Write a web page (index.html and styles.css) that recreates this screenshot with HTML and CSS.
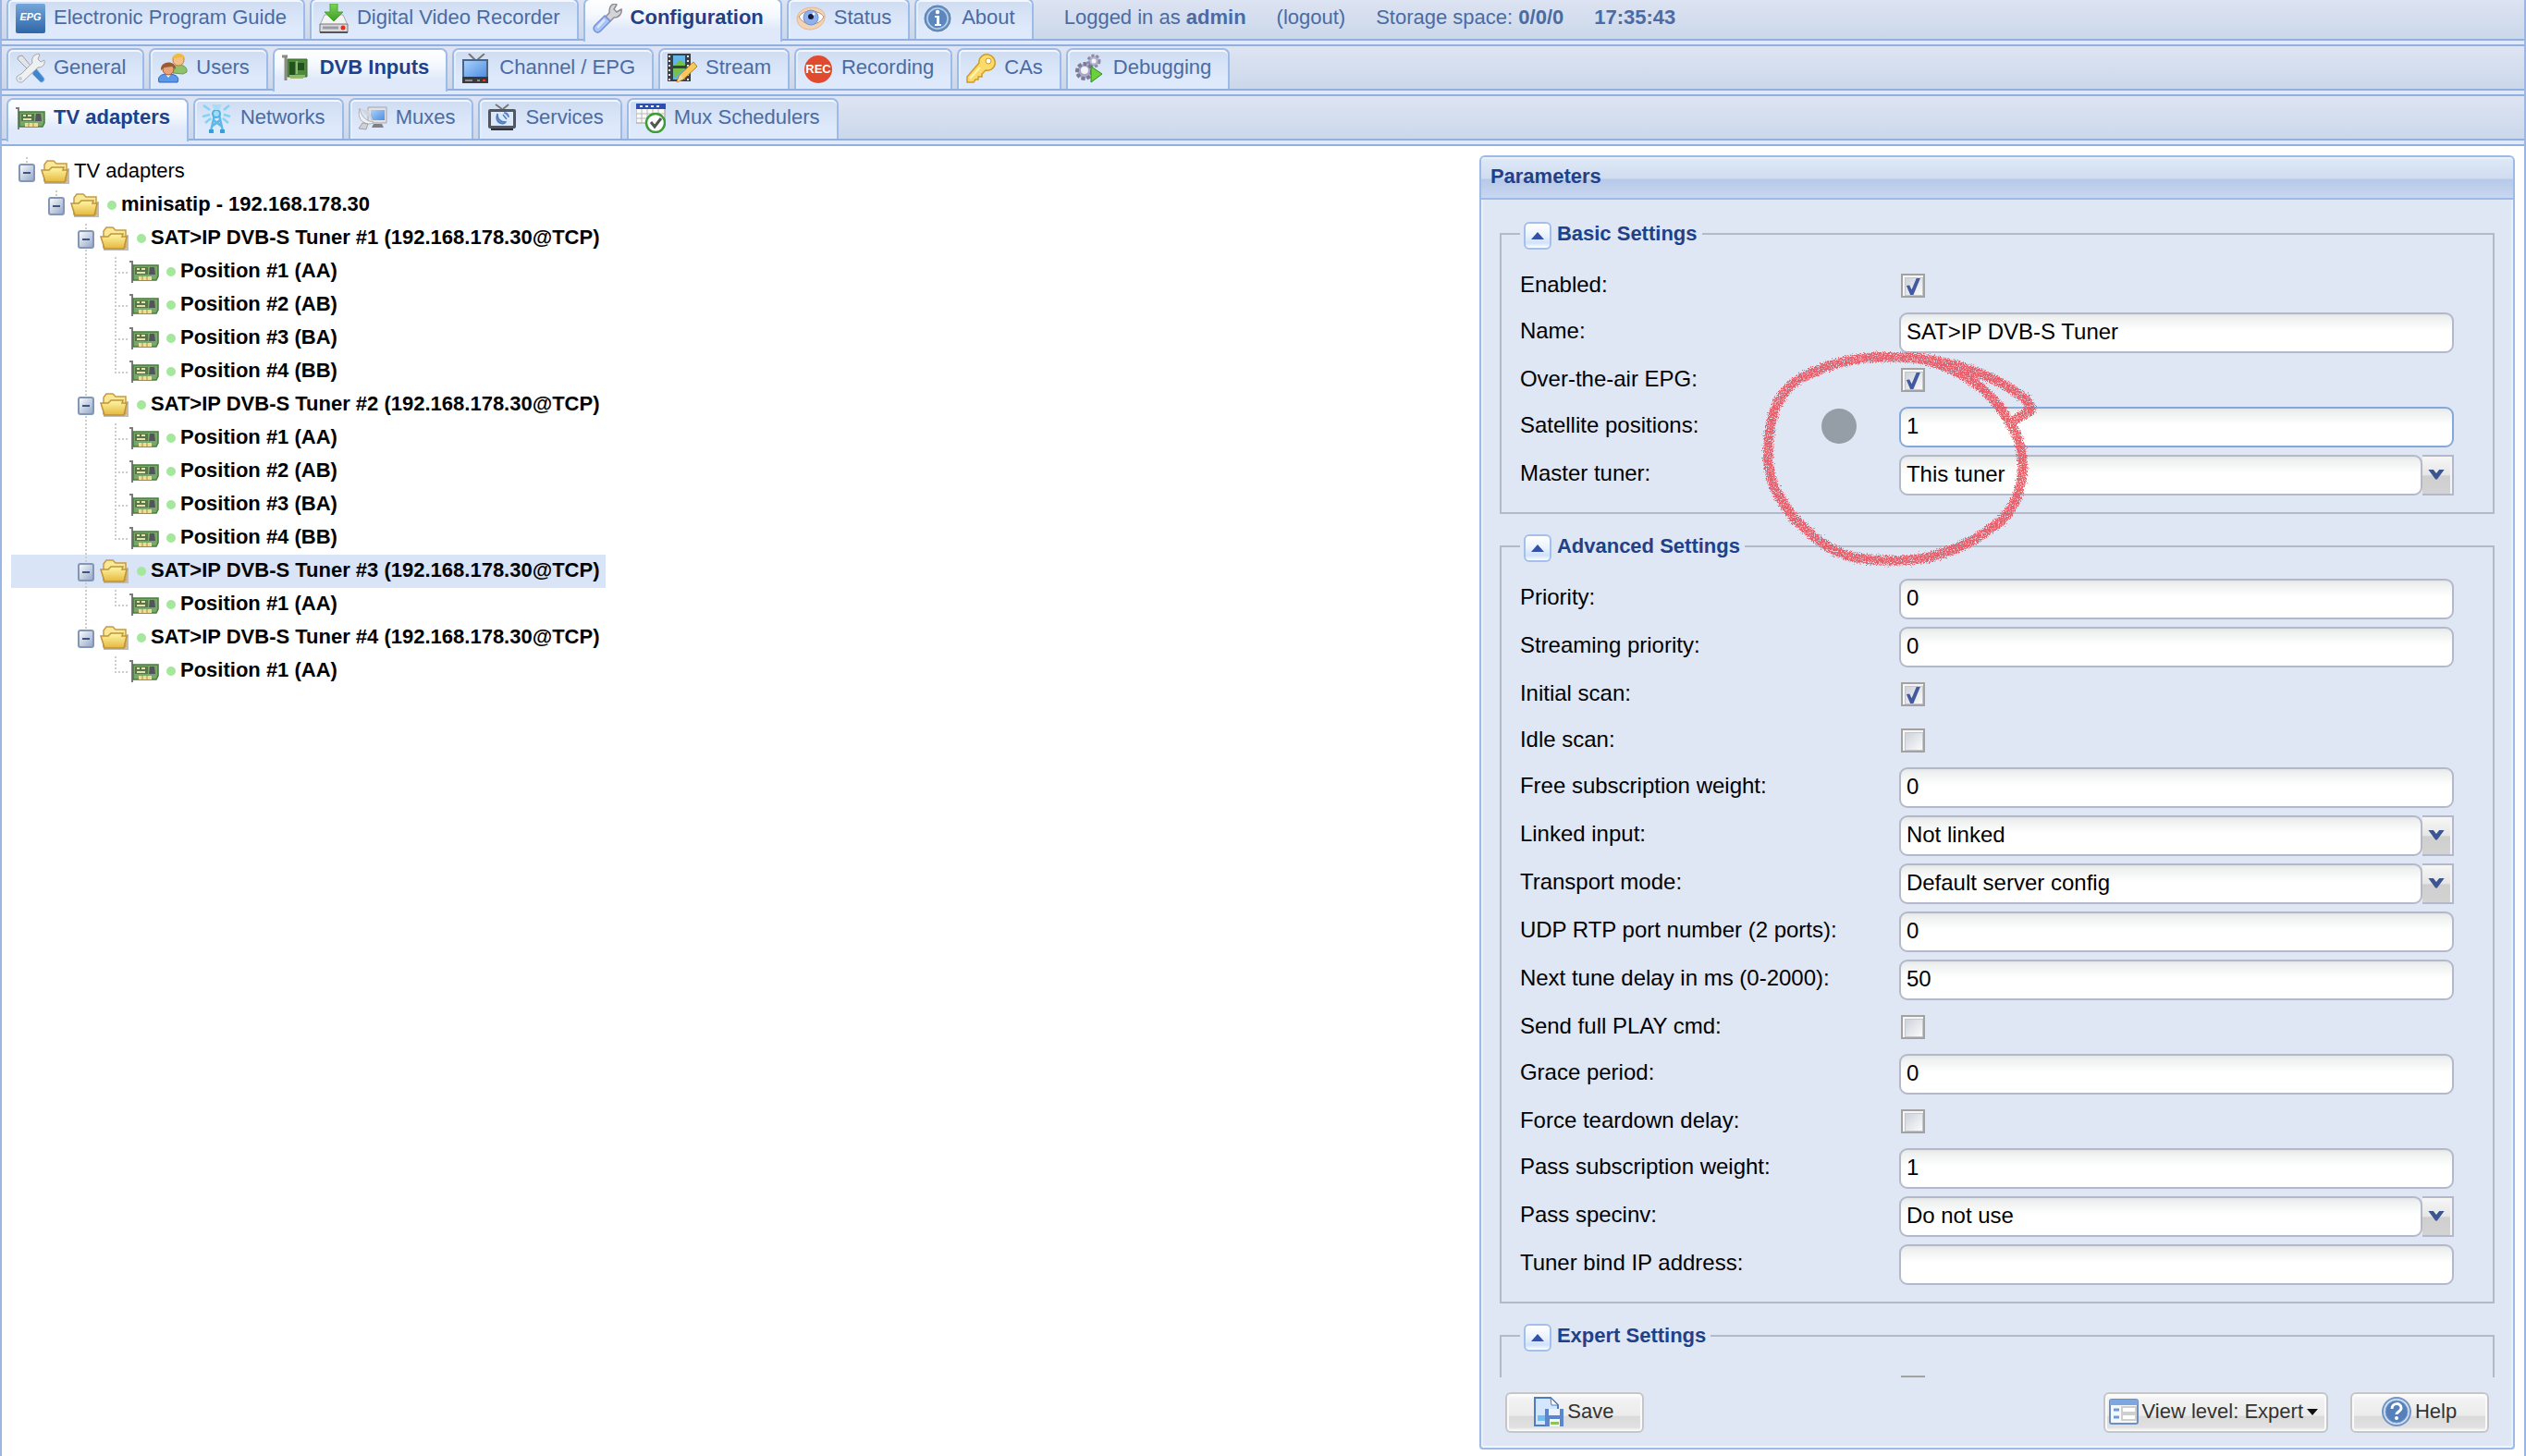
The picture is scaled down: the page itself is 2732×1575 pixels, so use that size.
FILE: index.html
```html
<!DOCTYPE html>
<html lang="en">
<head>
    <meta charset="UTF-8">
    <meta name="viewport" content="width=device-width, initial-scale=1.0">
    <title>Tvheadend</title>
    <link rel="stylesheet" href="styles.css">
</head>
<body>

<!-- Icon set -->
<svg class="icon-defs" aria-hidden="true">
    <defs>
        <linearGradient id="gBlue" x1="0" y1="0" x2="0" y2="1"><stop offset="0" stop-color="#74a6d9"/><stop offset="1" stop-color="#2f66a8"/></linearGradient>
        <linearGradient id="gFolder" x1="0" y1="0" x2="0" y2="1"><stop offset="0" stop-color="#fff6a8"/><stop offset="1" stop-color="#e5b93c"/></linearGradient>
        <linearGradient id="gScreen" x1="0" y1="0" x2="1" y2="1"><stop offset="0" stop-color="#a9d0fb"/><stop offset="1" stop-color="#4f8fe0"/></linearGradient>
        <linearGradient id="gMinus" x1="0" y1="0" x2="1" y2="1"><stop offset="0" stop-color="#ffffff"/><stop offset="1" stop-color="#90a4c6"/></linearGradient>
        <linearGradient id="gArrow" x1="0" y1="0" x2="0" y2="1"><stop offset="0" stop-color="#7fd45a"/><stop offset="1" stop-color="#3a9e22"/></linearGradient>
        <filter id="crayon" x="-5%" y="-5%" width="110%" height="110%">
            <feTurbulence type="fractalNoise" baseFrequency="0.28" numOctaves="2" seed="4" result="noise"/>
            <feDisplacementMap in="SourceGraphic" in2="noise" xChannelSelector="R" yChannelSelector="G" scale="24" result="rough"/>
            <feColorMatrix in="noise" type="matrix" values="0 0 0 0 1  0 0 0 0 1  0 0 0 0 1  0 0 0 4 -1" result="grain"/>
            <feComposite in="rough" in2="grain" operator="in"/>
        </filter>
    </defs>

    <symbol id="i-dvr" viewBox="0 0 32 32">
        <path d="M6 12h20l5 11H1z" fill="#f4f4f4" stroke="#aaa"/>
        <path d="M1 22h30v9H1z" fill="#d9d9dc" stroke="#777"/>
        <path d="M1 30h30v2H1z" fill="#555"/>
        <path d="M4 26h17" stroke="#9a9aa8" stroke-width="3"/>
        <circle cx="26" cy="26" r="2.5" fill="#ee2a1a"/>
        <path d="M12 0h8v9h6L16 19 6 9h6z" fill="url(#gArrow)" stroke="#4ba632"/>
    </symbol>
    <symbol id="i-wrench" viewBox="0 0 32 32">
        <path d="M20 2c2-2 5-2 6-1l-3 5 3 3 5-3c1 4-2 9-8 9l-4 4-5-5 4-4c0-3 0-6 2-8z" fill="#d4d4d8" stroke="#8e8e94" stroke-width="1.5"/>
        <path d="M13 13l6 6L8 30c-3 3-9-1-6-6z" fill="#a9c4f5" stroke="#7392d6" stroke-width="1.5"/>
        <path d="M13 17L5 26" stroke="#dbe7fd" stroke-width="2.5"/>
    </symbol>
    <symbol id="i-eye" viewBox="0 0 32 32">
        <path d="M1 15C4 1 28 1 31 12c1 8-5 15-15 16C7 28 1 24 1 15z" fill="#f3d3b4" stroke="#e3b78c"/>
        <path d="M3 14C8 6 24 6 30 14c-5 10-20 12-27 0z" fill="#fff" stroke="#b98a60"/>
        <circle cx="16" cy="15" r="8" fill="#8fb1f0" stroke="#6f92d6"/>
        <circle cx="16" cy="14" r="3" fill="#1c1c3c"/>
        <circle cx="19" cy="11" r="1.5" fill="#fff"/>
    </symbol>
    <symbol id="i-info" viewBox="0 0 32 32">
        <circle cx="15" cy="16" r="14" fill="#6c93c3" stroke="#5278a8"/>
        <circle cx="15" cy="16" r="11" fill="#5b87bd" stroke="#bcd0ea" stroke-width="1.5"/>
        <circle cx="15" cy="9" r="2.2" fill="#fff"/>
        <path d="M12 13h5v9h2v2h-7v-2h2v-7h-2z" fill="#fff"/>
    </symbol>
    <symbol id="i-tools" viewBox="0 0 32 32">
        <path d="M3 3l4-1 13 16-3 3L2 6z" fill="#e2e4e8" stroke="#9da0a6"/>
        <path d="M19 17l3-1 9 11c0 3-2 4-4 4l-9-9z" fill="#3f86cc" stroke="#8fb6de"/>
        <path d="M20 2c3-2 5-2 6-1l-2 5 3 3 4-2c1 5-2 8-7 8L9 29c-3 4-9 2-8-4 1-1 3-2 5-3L18 10c-1-3 0-6 2-8z" fill="#eef0f2" stroke="#a3a6ac"/>
        <circle cx="5" cy="27" r="2" fill="#c3cfde"/>
    </symbol>
    <symbol id="i-users" viewBox="0 0 32 32">
        <path d="M16 21c-1-6 2-9 6-9s10 2 9 8l-4 2z" fill="#8fc06a" stroke="#6b9c48"/>
        <circle cx="22" cy="7" r="6" fill="#f4c08a" stroke="#b98343"/>
        <path d="M15 7c0-9 14-9 14-1l-3-2-9 1z" fill="#eebb3a"/>
        <path d="M1 31c-2-6 2-9 9-9s14 2 11 9z" fill="#5c97e8" stroke="#2f64b8"/>
        <path d="M8 22l3 4 3-4z" fill="#fff"/>
        <circle cx="11" cy="17" r="6" fill="#e9a27a" stroke="#9a5a32"/>
        <path d="M3 18c-1-11 17-11 16-1l-4-3-8 1z" fill="#9a5c36"/>
    </symbol>
    <symbol id="i-pci" viewBox="0 0 32 32">
        <path d="M0 3h6M4 3v26" stroke="#8a8a80" stroke-width="3" fill="none"/>
        <path d="M6 6h21v19H6z" fill="#4f8a3c" stroke="#3b6a2f"/>
        <path d="M8 9h6v14H8zM17 10h7v8h-7z" fill="#24521f"/>
        <path d="M16 8v14M8 24h17" stroke="#9ccc7c" stroke-width="1.5"/>
        <path d="M9 25h14v2H9z" fill="#a8b070"/>
    </symbol>
    <symbol id="i-tv" viewBox="0 0 32 32">
        <path d="M8 0l7 7M25 0l-8 7" stroke="#777" stroke-width="2" fill="none"/>
        <path d="M1 6h28v20H1z" fill="#4e6485"/>
        <path d="M3 8h24v17H3z" fill="url(#gScreen)"/>
        <path d="M1 25h28v7H1z" fill="#3a3a3e"/>
        <path d="M4 29h8M17 29h3" stroke="#aaa" stroke-width="1.5"/>
        <path d="M23 29h3" stroke="#e83a2a" stroke-width="2"/>
    </symbol>
    <symbol id="i-film" viewBox="0 0 32 32">
        <path d="M0 0h25v30H0z" fill="#3c3f44"/>
        <path d="M2 2v28M22 2v28" stroke="#e8e8e8" stroke-width="2" stroke-dasharray="2 3"/>
        <path d="M6 2h13v11H6zM6 16h13v12H6z" fill="#65b5e6"/>
        <path d="M6 13l8-6 5 4v2zM6 16h13L7 27z" fill="#74c14c"/>
        <path d="M28 9l4 5-15 14-7 3 2-7z" fill="#f6c95c" stroke="#b97c1e"/>
        <path d="M14 23l3 4-7 4z" fill="#eed9b4"/>
    </symbol>
    <symbol id="i-key" viewBox="0 0 32 32">
        <path d="M14 10c-1-6 5-10 10-9 5 1 8 6 7 11-1 4-5 7-10 6l-4 4v3h-4v3h-3l-2 3H1v-6z" fill="#fbdc6a" stroke="#cf9a28" stroke-width="1.5"/>
        <circle cx="24" cy="8" r="3" fill="#fff" stroke="#cf9a28"/>
        <path d="M15 15L4 27" stroke="#fff3b8" stroke-width="2"/>
    </symbol>
    <symbol id="i-gears" viewBox="0 0 32 32">
        <circle cx="20" cy="8" r="6" fill="#b4b3ce" stroke="#8b8aa8" stroke-width="3" stroke-dasharray="3 2"/>
        <circle cx="20" cy="8" r="2.5" fill="#f3f3fa"/>
        <circle cx="10" cy="19" r="8" fill="#a9a8c6" stroke="#7b7a98" stroke-width="4" stroke-dasharray="4 2"/>
        <circle cx="10" cy="18" r="4" fill="#f3f3fa"/>
        <path d="M17 14l12 8-12 9z" fill="#6bd03c" stroke="#2f8a1c"/>
    </symbol>
    <symbol id="i-card" viewBox="0 0 32 32">
        <path d="M0 5h3v23" fill="none" stroke="#7d7d7d" stroke-width="2"/>
        <path d="M4 9h27v12l-2 4H4z" fill="#78a867" stroke="#4a7a42" stroke-width="1.5"/>
        <path d="M6 11h14v8H6z" fill="#56754c"/>
        <path d="M8 13h3M13 13h4M8 17h9" stroke="#e4e2a6" stroke-width="2"/>
        <path d="M21 19l1-8h5l1 8z" fill="#54545e"/>
        <path d="M10 21h14v4H10z" fill="#f0dc92"/>
        <path d="M14 21v4M19 21v4" stroke="#a58f4c"/>
    </symbol>
    <symbol id="i-tower" viewBox="0 0 32 32">
        <path d="M14 8L9 30M17 8l5 22M12 18l8 6M19 18l-8 6" stroke="#5cb8e6" stroke-width="2.5" fill="none"/>
        <path d="M7 30h5M19 30h5" stroke="#3a9ed4" stroke-width="4"/>
        <circle cx="15" cy="11" r="4" fill="#a5dcf5" stroke="#4cb2e4" stroke-width="2"/>
        <path d="M10 1h11l-3 6h-5z" fill="#a5dff7"/>
        <path d="M8 7L1 2M23 7l6-5M8 12L0 14M23 12l7 2M9 16l-6 5M22 16l6 5" stroke="#84d2f4" stroke-width="2.5"/>
    </symbol>
    <symbol id="i-mux" viewBox="0 0 32 32">
        <path d="M11 4h20v17H11z" fill="#dfe1e6" stroke="#a2a5ac"/>
        <path d="M14 7h15v11H14z" fill="url(#gScreen)"/>
        <path d="M17 22h9l2 4H15z" fill="#7e8086"/>
        <path d="M2 5c2 10 7 14 15 15-2 4-13 2-15-5-1-3-1-7 0-10z" fill="#f2f2f4" stroke="#aeb0b6"/>
        <path d="M2 5l15 15L12 8z" fill="#d2d4da"/>
        <path d="M5 21l-4 6 8 1 2-6z" fill="#cfd1d6" stroke="#a0a2a8"/>
    </symbol>
    <symbol id="i-service" viewBox="0 0 32 32">
        <path d="M9 1l7 5M23 1l-6 5" stroke="#777" stroke-width="2" fill="none"/>
        <rect x="1" y="6" width="30" height="21" rx="2" fill="#505864"/>
        <rect x="4" y="9" width="24" height="15" fill="#dde8f8"/>
        <path d="M11 11c0 7 4 9 9 9-2 4-13 1-9-9zM17 12l4 5M18 10c3 0 5 2 5 5" fill="#6f9ada" stroke="#4f7cc4" stroke-width="1.5"/>
        <path d="M4 27h24v2H4z" fill="#2e3238"/>
    </symbol>
    <symbol id="i-sched" viewBox="0 0 32 32">
        <path d="M0 1h31v20H0z" fill="#fafafa" stroke="#9b9b9b"/>
        <path d="M0 0h32v6H0z" fill="#2c50b0"/>
        <path d="M4 3h24" stroke="#e8eefc" stroke-width="2" stroke-dasharray="3 3"/>
        <path d="M0 11h31M0 16h31M6 6v15M12 6v15M18 6v15M24 6v15" stroke="#b8b8b8"/>
        <circle cx="21" cy="21" r="10" fill="#fff" stroke="#3f9a38" stroke-width="2.5"/>
        <path d="M16 20l4 5 7-9" stroke="#555" stroke-width="3" fill="none"/>
    </symbol>
    <symbol id="i-folder" viewBox="0 0 32 32">
        <path d="M4 28h26V12" fill="none" stroke="#bdbdbd" stroke-width="2"/>
        <path d="M4 8l3-4h7l3 3h11v19H4z" fill="#f9e894" stroke="#c49a4a" stroke-width="1.5"/>
        <path d="M1 14h8l3-3h13l-1 3h5l-3 13H5z" fill="url(#gFolder)" stroke="#c0933a" stroke-width="1.5"/>
    </symbol>
    <symbol id="i-minus" viewBox="0 0 18 20">
        <rect x="1" y="1" width="16" height="18" rx="2" fill="url(#gMinus)" stroke="#8496b6" stroke-width="2"/>
        <path d="M5 10h8" stroke="#3d5583" stroke-width="2"/>
    </symbol>
    <symbol id="i-save" viewBox="0 0 32 32">
        <path d="M1 1h17l8 8v22H1z" fill="#d3e6fb" stroke="#4b7cc4" stroke-width="2"/>
        <path d="M18 1l1 8h7z" fill="#fff" stroke="#4b7cc4"/>
        <path d="M4 20h9v6H4z" fill="#74bdf5"/>
        <path d="M12 13h20v19H14l-2-2z" fill="#5b86cb"/>
        <path d="M16 13h12v7H16z" fill="#e9f1fc"/>
        <path d="M17 24h11v8H17z" fill="#f3f6fa"/>
        <path d="M18 27h9v3h-9z" fill="#8bc653"/>
    </symbol>
    <symbol id="i-level" viewBox="0 0 32 32">
        <rect x="1" y="3" width="30" height="26" rx="2" fill="#f4f7fc" stroke="#6d8fc6" stroke-width="2"/>
        <path d="M1 3h30v6H1z" fill="#7da7e0"/>
        <path d="M5 14h6M5 22h6" stroke="#6d9be0" stroke-width="3"/>
        <path d="M14 11h15v6H14zM14 19h15v6H14z" fill="#fff" stroke="#cfcfcf" stroke-width="2"/>
    </symbol>
    <symbol id="i-help" viewBox="0 0 32 32">
        <circle cx="16" cy="16" r="15" fill="#d3e0f1" stroke="#7294c6" stroke-width="2"/>
        <circle cx="16" cy="16" r="12" fill="#5580b9" stroke="#7ea0d0"/>
        <path d="M11 13c0-7 10-7 10-1 0 4-5 4-5 7" fill="none" stroke="#fff" stroke-width="3"/>
        <circle cx="16" cy="23" r="2" fill="#fff"/>
    </symbol>
</svg>

<!-- Main tabs -->
<nav class="tab-bar tab-bar-main">
    <a class="tab" href="#epg"><svg class="icon" viewBox="0 0 32 32">
        <rect width="32" height="32" rx="2" fill="url(#gBlue)"/>
        <text x="16" y="18" text-anchor="middle" font-size="11" font-weight="bold" font-style="italic" fill="#fff">EPG</text>
    </svg>Electronic Program Guide</a>
    <a class="tab" href="#dvr"><svg class="icon"><use href="#i-dvr"/></svg>Digital Video Recorder</a>
    <a class="tab active" href="#config"><svg class="icon"><use href="#i-wrench"/></svg>Configuration</a>
    <a class="tab" href="#status"><svg class="icon"><use href="#i-eye"/></svg>Status</a>
    <a class="tab" href="#about"><svg class="icon"><use href="#i-info"/></svg>About</a>
    <div class="session">
        <span>Logged in as <b>admin</b></span>
        <a href="#logout">(logout)</a>
        <span>Storage space: <b>0/0/0</b></span>
        <b>17:35:43</b>
    </div>
</nav>

<!-- Configuration tabs -->
<nav class="tab-bar">
    <a class="tab" href="#general"><svg class="icon"><use href="#i-tools"/></svg>General</a>
    <a class="tab" href="#users"><svg class="icon"><use href="#i-users"/></svg>Users</a>
    <a class="tab active" href="#dvb"><svg class="icon"><use href="#i-pci"/></svg>DVB Inputs</a>
    <a class="tab" href="#channel"><svg class="icon"><use href="#i-tv"/></svg>Channel / EPG</a>
    <a class="tab" href="#stream"><svg class="icon"><use href="#i-film"/></svg>Stream</a>
    <a class="tab" href="#recording"><svg class="icon" viewBox="0 0 32 32">
        <circle cx="16" cy="17" r="15" fill="#e04a2e"/>
        <text x="16" y="21" text-anchor="middle" font-size="13" font-weight="bold" fill="#fff">REC</text>
    </svg>Recording</a>
    <a class="tab" href="#cas"><svg class="icon"><use href="#i-key"/></svg>CAs</a>
    <a class="tab" href="#debugging"><svg class="icon"><use href="#i-gears"/></svg>Debugging</a>
</nav>

<!-- DVB input tabs -->
<nav class="tab-bar">
    <a class="tab active" href="#adapters"><svg class="icon"><use href="#i-card"/></svg>TV adapters</a>
    <a class="tab" href="#networks"><svg class="icon"><use href="#i-tower"/></svg>Networks</a>
    <a class="tab" href="#muxes"><svg class="icon"><use href="#i-mux"/></svg>Muxes</a>
    <a class="tab" href="#services"><svg class="icon"><use href="#i-service"/></svg>Services</a>
    <a class="tab" href="#schedulers"><svg class="icon"><use href="#i-sched"/></svg>Mux Schedulers</a>
</nav>

<main class="content">

    <!-- Adapter tree -->
    <section class="tree-pane">
        <ul class="tree">
            <li class="node root"><i class="cell stub"><svg class="minus"><use href="#i-minus"/></svg></i><svg class="icon"><use href="#i-folder"/></svg>TV adapters</li>
            <li class="node"><i class="cell"></i><i class="cell stub"><svg class="minus"><use href="#i-minus"/></svg></i><svg class="icon"><use href="#i-folder"/></svg><i class="dot"></i>minisatip - 192.168.178.30</li>

            <li class="node"><i class="cell"></i><i class="cell"></i><i class="cell line"><svg class="minus"><use href="#i-minus"/></svg></i><svg class="icon"><use href="#i-folder"/></svg><i class="dot"></i>SAT&gt;IP DVB-S Tuner #1 (192.168.178.30@TCP)</li>
            <li class="node"><i class="cell"></i><i class="cell"></i><i class="cell line"></i><i class="cell line elbow"></i><svg class="icon"><use href="#i-card"/></svg><i class="dot"></i>Position #1 (AA)</li>
            <li class="node"><i class="cell"></i><i class="cell"></i><i class="cell line"></i><i class="cell line elbow"></i><svg class="icon"><use href="#i-card"/></svg><i class="dot"></i>Position #2 (AB)</li>
            <li class="node"><i class="cell"></i><i class="cell"></i><i class="cell line"></i><i class="cell line elbow"></i><svg class="icon"><use href="#i-card"/></svg><i class="dot"></i>Position #3 (BA)</li>
            <li class="node"><i class="cell"></i><i class="cell"></i><i class="cell line"></i><i class="cell stub elbow"></i><svg class="icon"><use href="#i-card"/></svg><i class="dot"></i>Position #4 (BB)</li>

            <li class="node"><i class="cell"></i><i class="cell"></i><i class="cell line"><svg class="minus"><use href="#i-minus"/></svg></i><svg class="icon"><use href="#i-folder"/></svg><i class="dot"></i>SAT&gt;IP DVB-S Tuner #2 (192.168.178.30@TCP)</li>
            <li class="node"><i class="cell"></i><i class="cell"></i><i class="cell line"></i><i class="cell line elbow"></i><svg class="icon"><use href="#i-card"/></svg><i class="dot"></i>Position #1 (AA)</li>
            <li class="node"><i class="cell"></i><i class="cell"></i><i class="cell line"></i><i class="cell line elbow"></i><svg class="icon"><use href="#i-card"/></svg><i class="dot"></i>Position #2 (AB)</li>
            <li class="node"><i class="cell"></i><i class="cell"></i><i class="cell line"></i><i class="cell line elbow"></i><svg class="icon"><use href="#i-card"/></svg><i class="dot"></i>Position #3 (BA)</li>
            <li class="node"><i class="cell"></i><i class="cell"></i><i class="cell line"></i><i class="cell stub elbow"></i><svg class="icon"><use href="#i-card"/></svg><i class="dot"></i>Position #4 (BB)</li>

            <li class="node selected"><i class="cell"></i><i class="cell"></i><i class="cell line"><svg class="minus"><use href="#i-minus"/></svg></i><svg class="icon"><use href="#i-folder"/></svg><i class="dot"></i>SAT&gt;IP DVB-S Tuner #3 (192.168.178.30@TCP)</li>
            <li class="node"><i class="cell"></i><i class="cell"></i><i class="cell line"></i><i class="cell stub elbow"></i><svg class="icon"><use href="#i-card"/></svg><i class="dot"></i>Position #1 (AA)</li>

            <li class="node"><i class="cell"></i><i class="cell"></i><i class="cell stub"><svg class="minus"><use href="#i-minus"/></svg></i><svg class="icon"><use href="#i-folder"/></svg><i class="dot"></i>SAT&gt;IP DVB-S Tuner #4 (192.168.178.30@TCP)</li>
            <li class="node"><i class="cell"></i><i class="cell"></i><i class="cell"></i><i class="cell stub elbow"></i><svg class="icon"><use href="#i-card"/></svg><i class="dot"></i>Position #1 (AA)</li>
        </ul>
    </section>

    <!-- Parameters -->
    <form class="panel">
        <h2 class="panel-title">Parameters</h2>

        <div class="panel-body">
            <fieldset class="group">
                <legend><button type="button" class="toggle" aria-label="Collapse Basic Settings"></button><span>Basic Settings</span></legend>
                <div class="row row-check"><label for="enabled">Enabled:</label><input type="checkbox" id="enabled" checked></div>
                <div class="row"><label for="name">Name:</label><input type="text" id="name" value="SAT&gt;IP DVB-S Tuner"></div>
                <div class="row row-check"><label for="otaepg">Over-the-air EPG:</label><input type="checkbox" id="otaepg" checked></div>
                <div class="row"><label for="positions">Satellite positions:</label><input type="text" id="positions" class="focused" value="1"></div>
                <div class="row"><label for="master">Master tuner:</label><select id="master"><option>This tuner</option></select><span class="trigger"></span></div>
            </fieldset>

            <fieldset class="group">
                <legend><button type="button" class="toggle" aria-label="Collapse Advanced Settings"></button><span>Advanced Settings</span></legend>
                <div class="row"><label for="priority">Priority:</label><input type="text" id="priority" value="0"></div>
                <div class="row"><label for="spriority">Streaming priority:</label><input type="text" id="spriority" value="0"></div>
                <div class="row row-check"><label for="initscan">Initial scan:</label><input type="checkbox" id="initscan" checked></div>
                <div class="row row-check"><label for="idlescan">Idle scan:</label><input type="checkbox" id="idlescan"></div>
                <div class="row"><label for="weight">Free subscription weight:</label><input type="text" id="weight" value="0"></div>
                <div class="row"><label for="linked">Linked input:</label><select id="linked"><option>Not linked</option></select><span class="trigger"></span></div>
                <div class="row"><label for="transport">Transport mode:</label><select id="transport"><option>Default server config</option></select><span class="trigger"></span></div>
                <div class="row"><label for="rtpport">UDP RTP port number (2 ports):</label><input type="text" id="rtpport" value="0"></div>
                <div class="row"><label for="tunedelay">Next tune delay in ms (0-2000):</label><input type="text" id="tunedelay" value="50"></div>
                <div class="row row-check"><label for="fullplay">Send full PLAY cmd:</label><input type="checkbox" id="fullplay"></div>
                <div class="row"><label for="grace">Grace period:</label><input type="text" id="grace" value="0"></div>
                <div class="row row-check"><label for="teardown">Force teardown delay:</label><input type="checkbox" id="teardown"></div>
                <div class="row"><label for="passweight">Pass subscription weight:</label><input type="text" id="passweight" value="1"></div>
                <div class="row"><label for="specinv">Pass specinv:</label><select id="specinv"><option>Do not use</option></select><span class="trigger"></span></div>
                <div class="row"><label for="bindip">Tuner bind IP address:</label><input type="text" id="bindip" value=""></div>
            </fieldset>

            <fieldset class="group">
                <legend><button type="button" class="toggle" aria-label="Collapse Expert Settings"></button><span>Expert Settings</span></legend>
                <div class="row row-check"><span class="row-blank"></span><input type="checkbox" aria-label="Expert option"></div>
            </fieldset>
        </div>

        <div class="panel-buttons">
            <button type="button" class="btn"><svg class="icon"><use href="#i-save"/></svg>Save</button>
            <span class="fill"></span>
            <button type="button" class="btn"><svg class="icon"><use href="#i-level"/></svg>View level: Expert<i class="caret"></i></button>
            <button type="button" class="btn"><svg class="icon"><use href="#i-help"/></svg>Help</button>
        </div>

        <!-- Hand-drawn marker over the form -->
        <svg class="marker" viewBox="0 0 1020 750" aria-hidden="true">
            <circle cx="327" cy="273" r="57" fill="#959da7"/>
            <path filter="url(#crayon)" fill="none" stroke="#e8505a" stroke-width="31" stroke-linecap="round" stroke-linejoin="round" opacity="0.9"
                d="M882 264L952 218L932 184C880 145 820 112 740 86C640 52 540 44 430 50C330 58 250 88 180 132C115 185 102 260 97 340C92 430 115 490 185 575C260 650 310 685 380 700C450 710 520 715 600 702C680 685 740 660 810 612C880 565 905 520 918 450C930 380 915 310 880 260C840 190 780 130 700 92C650 68 610 56 560 50"/>
        </svg>
    </form>

</main>

</body>
</html>
```
FILE: styles.css
```css
* {
    box-sizing: border-box;
}

body {
    margin: 0;
    height: 100vh;
    display: flex;
    flex-direction: column;
    overflow: hidden;
    font-family: "Liberation Sans", Arial, sans-serif;
    font-size: 22px;
    color: #000;
    background: #fff;
    border-left: 2px solid #9cb6e3;
    border-right: 2px solid #9cb6e3;
}

button, input, select {
    font-family: inherit;
    font-size: 24px;
    color: #000;
    margin: 0;
}

.icon-defs {
    position: absolute;
    width: 0;
    height: 0;
}

.icon {
    flex: none;
    width: 32px;
    height: 32px;
}

/* Tab bars */
.tab-bar {
    flex: none;
    display: flex;
    gap: 5px;
    height: 54px;
    padding: 2px 5px 0;
    background: linear-gradient(#dee4f3, #cbd8ea 46px, #91b0e0 46px, #91b0e0 48px, #dfe9fa 48px);
    border-bottom: 2px solid #91b0e0;
}
.tab-bar-main {
    margin-top: -4px;
}
.tab {
    display: flex;
    gap: 9px;
    height: 44px;
    padding: 4px 18px 0 8px;
    line-height: 30px;
    white-space: nowrap;
    color: #4a6ba3;
    text-decoration: none;
    border: 2px solid #9dbbe8;
    border-bottom: none;
    border-radius: 7px 7px 0 0;
    background: linear-gradient(#cfdcf1, #deeafb 70%);
    box-shadow: inset 0 2px #f4f8fe, inset 2px 0 #e6eefb;
}
.tab.active {
    height: 47px;
    font-weight: bold;
    color: #20418a;
    background: linear-gradient(#fff, #f3f7fd 40%, #dfe9fa 70%);
    box-shadow: none;
}
.session {
    display: flex;
    gap: 33px;
    padding: 6px 0 0 28px;
    line-height: 30px;
    color: #4a6ba3;
}
.session a {
    color: inherit;
    text-decoration: none;
}

.content {
    flex: 1;
    min-height: 0;
    display: flex;
    padding: 10px 10px 7px;
}

/* Tree */
.tree-pane {
    flex: 1;
    min-width: 0;
}
.tree {
    width: max-content;
    margin: 0;
    padding: 0;
    list-style: none;
}
.node {
    display: flex;
    align-items: flex-start;
    height: 36px;
    padding-right: 7px;
    line-height: 34px;
    font-weight: bold;
    white-space: nowrap;
}
.node.root {
    font-weight: normal;
}
.node.selected {
    background: #d9e4f7;
}
.node .icon {
    margin: 2px 4px 0 0;
}
.cell {
    flex: none;
    width: 32px;
    height: 36px;
    background-repeat: no-repeat;
}
.cell.line {
    background-image: repeating-linear-gradient(transparent 0 2px, #ccc 2px 4px);
    background-size: 2px 36px;
    background-position: 16px 0;
}
.cell.stub {
    background-image: repeating-linear-gradient(transparent 0 2px, #ccc 2px 4px);
    background-size: 2px 18px;
    background-position: 16px 0;
}
.cell.elbow::after {
    content: "";
    display: block;
    height: 2px;
    margin: 18px 0 0 16px;
    background: repeating-linear-gradient(90deg, #ccc 0 2px, transparent 2px 4px);
}
.minus {
    display: block;
    width: 18px;
    height: 20px;
    margin: 9px 0 0 8px;
}
.dot {
    flex: none;
    width: 10px;
    height: 10px;
    margin: 13px 5px 0 4px;
    border-radius: 50%;
    background: #a3e89b;
}

/* Parameters panel */
.panel {
    position: relative;
    flex: 0 0 41vw;
    display: flex;
    flex-direction: column;
    border: 2px solid #9dbbe8;
    border-radius: 6px 6px 4px 4px;
    background: #dfe6f4;
    box-shadow: inset 2px 0 #eaf0fa, inset -2px 0 #eaf0fa, inset 0 -2px #f2f6fc;
}
.panel-title {
    flex: none;
    height: 46px;
    margin: 0;
    padding: 0 10px;
    line-height: 42px;
    font-size: 22px;
    color: #20418a;
    border-bottom: 2px solid #9dbbe8;
    border-radius: 4px 4px 0 0;
    background: linear-gradient(#eff4fb 0, #dde8f6 3px, #d0dcf0 23px, #b6c9e8 24px, #c9d7f0 44px);
}
.panel-body {
    flex: 1;
    min-height: 0;
    overflow: hidden;
    padding: 20px 20px 0;
}
.group {
    min-width: 0;
    margin: 0 0 18px;
    padding: 18px 42px 18px 20px;
    border: 2px solid #b4b8c8;
}
.group legend {
    display: flex;
    align-items: flex-end;
    gap: 6px;
    height: 34px;
    padding: 0 5px 0 4px;
    line-height: 34px;
    font-weight: bold;
    color: #20418a;
}
.toggle {
    width: 30px;
    height: 30px;
    padding: 0;
    display: flex;
    align-items: center;
    justify-content: center;
    border: 2px solid #a3c0ec;
    border-radius: 6px;
    background: linear-gradient(#fff, #e9f2fd 50%, #d0e2fa 80%, #fff);
}
.toggle::before {
    content: "";
    border: 7px solid transparent;
    border-top: none;
    border-bottom: 8px solid #3450a8;
}

.row {
    display: flex;
    height: 44px;
    margin-bottom: 8px;
    font-size: 24px;
}
.row:last-child {
    margin-bottom: 0;
}
.row-check {
    height: 42px;
}
.row label, .row-blank {
    flex: 0 0 410px;
    line-height: 40px;
}
.row input[type="text"], .row select {
    flex: 1;
    min-width: 0;
    height: 44px;
    padding: 0 6px 2px;
    border: 2px solid #b4b8c8;
    border-radius: 9px;
    outline: none;
    background: linear-gradient(#e4e7ea, #eef1f0 4px, #fff 18px);
}
.row input.focused {
    border-color: #84a9d8;
}
.row select {
    appearance: none;
    padding-bottom: 4px;
}
.trigger {
    flex: none;
    width: 34px;
    height: 44px;
    display: flex;
    align-items: center;
    justify-content: center;
    padding: 0 2px 2px 0;
    border: 2px solid #b4b8c8;
    border-left: none;
    background: linear-gradient(#f6f6f6, #e6e6e6 50%, #cfcfcf 52%, #d3d3d3);
    box-shadow: inset -2px 0 #f4f4f4;
}
.trigger::before {
    content: "";
    width: 18px;
    height: 11px;
    background: #3c5591;
    clip-path: polygon(0 0, 30% 0, 50% 40%, 70% 0, 100% 0, 55% 100%, 45% 100%);
}
.row input[type="checkbox"] {
    appearance: none;
    width: 26px;
    height: 26px;
    margin: 8px 2px;
    padding: 2px;
    border: 2px solid #a2a2a2;
    background: #f6f6f6;
}
.row input[type="checkbox"]::before {
    content: "";
    display: block;
    width: 18px;
    height: 18px;
    border: 1px solid #c4c8ce;
    background: linear-gradient(135deg, #cdd2da, #fbfbfb);
}
.row input[type="checkbox"]:checked::after {
    content: "";
    display: block;
    width: 15px;
    height: 18px;
    margin: -19px 0 0 2px;
    background: #435aa0;
    clip-path: polygon(0 45%, 22% 42%, 38% 68%, 72% 0, 100% 0, 50% 100%, 28% 100%);
}

/* Bottom buttons */
.panel-buttons {
    flex: none;
    display: flex;
    gap: 24px;
    padding: 16px 26px;
}
.fill {
    flex: 1;
}
.btn {
    display: flex;
    align-items: center;
    justify-content: center;
    gap: 4px;
    min-width: 150px;
    height: 44px;
    padding: 0 5px 2px 4px;
    font-size: 22px;
    color: #333;
    white-space: nowrap;
    border: 2px solid #c6c6c8;
    border-radius: 6px;
    background: linear-gradient(#fff, #f1f1f1 15%, #ececec 58%, #dadada 60%, #e0e0e0 90%, #fff);
    box-shadow: inset 2px 0 #fafafa, inset -2px 0 #fafafa;
}
.caret {
    margin-right: 4px;
    border: 6px solid transparent;
    border-top: 7px solid #111;
    border-bottom: none;
}

/* Marker drawn above the fields */
.marker {
    position: absolute;
    left: 278px;
    top: 200px;
    width: 340px;
    height: 250px;
    pointer-events: none;
}
```
